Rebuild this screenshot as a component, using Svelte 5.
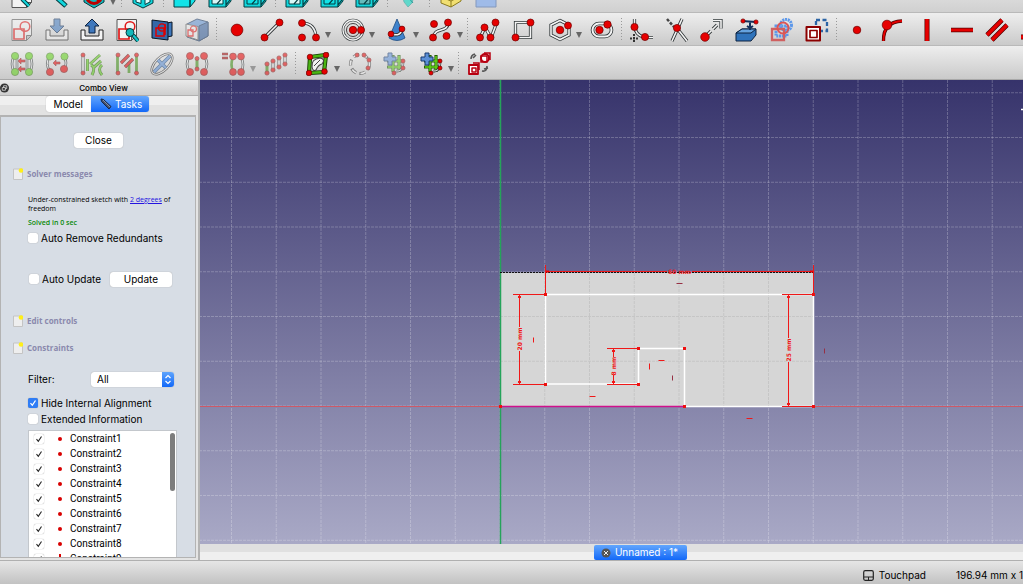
<script>
  const dot = (x, y, r = 3.2) =>
    `<circle cx="${x}" cy="${y}" r="${r}" fill="#e60000" stroke="#6d0000" stroke-width=".7"/>`;
  const green = (x, y, r = 3.2) =>
    `<circle cx="${x}" cy="${y}" r="${r}" fill="#5fd016" stroke="#2c6b06" stroke-width=".7"/>`;
  const rod = (d, inner = '#f4f4f4', w = 3.2) =>
    `<path d="${d}" fill="none" stroke="#2e3436" stroke-width="${w}"/><path d="${d}" fill="none" stroke="${inner}" stroke-width="${w - 1.6}"/>`;
  const bar = (d, w = 4) =>
    `<path d="${d}" fill="none" stroke="#4d0000" stroke-width="${w}"/><path d="${d}" fill="none" stroke="#e60000" stroke-width="${w - 1.4}"/>`;
  const line = (d, c, w = 1.5, extra = '') =>
    `<path d="${d}" fill="none" stroke="${c}" stroke-width="${w}" ${extra}/>`;
  const fill = (d, f, s = '#0b1521', w = 1) =>
    `<path d="${d}" fill="${f}" stroke="${s}" stroke-width="${w}" stroke-linejoin="round"/>`;
  const sketch = '<circle cx="15" cy="8.5" r="4.8" fill="none" stroke="#e01818" stroke-width="1.5"/><path d="M4 11h10v10H4z" fill="none" stroke="#e01818" stroke-width="1.7"/>';
  const page = fill('M2 1.5h19.500v16l-5 5H2z', '#f3f3f3', '#555') + fill('M21.500 17.500h-5v5z', '#bbb', '#555');
  const cube = (face) =>
    fill('M1 7 6 1h17v15l-5 6H1z', '#12d6dc', '#053c40') + fill('M4 10h11v9H4z', face, '#053c40') + line('M18 22V7H1M18 7l5-6M18 20l4-5M9 19l6-7', '#053c40', 1.2);
  const iso = fill('M12 1 22 6v12l-10 5L2 18V6z', '#12d6dc', '#053c40') + fill('M5 9l5 2.500v7L5 17z', '#dff', '#053c40') + fill('M14 11.500 19 9v8l-5 2.500z', '#dff', '#053c40');
  const hash = line('M10 3v17M16 3v17M4 9h17M4 15h17', '#245c06', 3.2) + line('M10 4v15M16 4v15M5 9h15M5 15h15', '#5fd016', 1.6)
    + fill('M5 1h4v4h4v4H9v4H5V9H1V5h4z', '#5b8fd6', '#183a70') + rod('M13 19q7 1 7-8', '#f4f4f4', 2.6) + dot(20, 9, 2) + dot(20, 16, 2) + dot(11, 21, 2);
  const mirror = (d) => rod('M4 4q-4 8 0 16M20 4q4 8 0 16', '#f4f4f4', 2.6) + rod('M7 5v14M17 5v14', '#f4f4f4', 2.6) + d;
  const arrowLeft = (x, y) => fill(`M${x} ${y}l3-3v2h4v2h-4v2z`, '#e60000', '#6d0000', 0.6);

  const icons = {
    fitAll: page + line('M19 21l-7-7', '#053c40', 4) + line('M19 21l-7-7', '#12d6dc', 2),
    zoom: line('M21 21 11 12', '#053c40', 5) + line('M20.500 20.500 11 12', '#12d6dc', 3) + '<circle cx="8" cy="8" r="6" fill="#dff" stroke="#053c40" stroke-width="2"/>',
    style: fill('M12 1 22 6v11l-10 6L2 17V6z', '#12b6bc', '#053c40') + '<circle cx="12" cy="11" r="7.500" fill="none" stroke="#b00" stroke-width="3"/>' + line('M7 6l10 10', '#b00', 2.5),
    iso,
    front: fill('M1 5 6 1h16v15l-5 6H1z', '#12e3e8', '#053c40') + line('M17 22V5l5-4', '#053c40'),
    top: cube('#d9f7f7'),
    right: cube('#12e3e8'),
    left: cube('#6bb'),
    measure: fill('M4 5h15l-4 13-4 4-4-5z', '#60d8cb', '#6aa', 0.7) + line('M10 11l6 7', '#399', 1),
    part: fill('M2 12 10 7l12 4v5l-10 6L2 18z', '#f1df72', '#8a7a20') + line('M2 12l10 4 10-5M12 16v6', '#8a7a20', 1),
    folder: fill('M2 5h20v17H2z', '#9fbbe8', '#8398bd'),
    sketch: page + sketch,
    importer: fill('M1 12h4v6h14v-6h4v10H1z', '#f4f4f4', '#222') + fill('M9 1h6v7h4l-7 7-7-7h4z', '#3f78bd', '#12305a'),
    exporter: fill('M1 12h4v6h14v-6h4v10H1z', '#f4f4f4', '#222') + fill('M9 15h6V8h4l-7-7-7 7h4z', '#3f78bd', '#0d2340'),
    viewSketch: page + sketch + line('M23 23l-5-6', '#053c40', 4) + line('M23 23l-5-6', '#12c6c9', 2.2) + '<circle cx="15" cy="14.500" r="4" fill="#14b8bb" stroke="#053c40"/>',
    section: fill('M17 5l5-1v14l-5 1z', '#3f78bd') + fill('M2 2l16 2v18L2 20z', '#3568a8') + '<circle cx="12" cy="9.500" r="3.600" fill="none" stroke="#d00" stroke-width="1.400"/>' + line('M6 10h8v8H6zM15 6v11', '#d00', 1.5),
    mapSketch: fill('M2 6 12 1l11 3v14l-9 5L2 19z', '#5d8fd0', '#12305a') + fill('M14 8l9-4v14l-9 5z', '#355f9c', '#12305a') + fill('M1 6l12 2.500V22L1 18z', '#eee', '#555') + line('M3 12h5v6H3z', '#e01818', 1.3) + '<circle cx="8.500" cy="11" r="3" fill="none" stroke="#e01818" stroke-width="1.200"/>',
    point: dot(12, 12, 5.9),
    line: rod('M4 20 20 4') + dot(4.5, 19.5, 3.5) + dot(19.5, 4.5, 3.5),
    arc: rod('M5 5Q18 5 19 19') + dot(5, 5, 3.5) + dot(5, 19.5, 3.5) + dot(19, 19.5, 3.5),
    circle: '<circle cx="12" cy="12" r="10" fill="none" stroke="#2e3436" stroke-width="2.600"/><circle cx="12" cy="12" r="10" fill="none" stroke="#f4f4f4" stroke-width="1.300"/><circle cx="12" cy="12" r="6.500" fill="none" stroke="#444" stroke-width="1"/>' + dot(12, 12, 3.7) + dot(20, 12, 3.5),
    conic: fill('M12 1 20 20q-8 5-16 0z', '#3f83cd', '#1c4a80', 0.8) + rod('M6 16q10 3 11-5') + dot(6, 16, 2.9) + dot(17, 11, 2.9),
    bspline: rod('M5 19C5 9 19 15 19 5') + dot(5, 6, 3.5) + dot(19, 4.5, 3.5) + dot(4, 19.5, 3.5) + dot(17.5, 18, 3.5),
    polyline: rod('M4 20 9 9l6 11 6-16') + dot(4, 19.5, 3.5) + dot(8.5, 9.5, 3.5) + dot(14.5, 19.5, 3.5) + dot(19.5, 4.5, 3.5),
    rect: rod('M4.500 4.500h15v15h-15z') + dot(19.5, 4.5, 3.5) + dot(4.5, 19.5, 3.5),
    polygon: rod('M12 2.500 21 7v10l-9 4.500L3 17V7z') + dot(12, 12, 3.8) + dot(20, 7.5, 3.5),
    slot: '<rect x="2.500" y="5.500" width="19" height="13" rx="6.500" fill="none" stroke="#2e3436" stroke-width="3.600"/><rect x="2.500" y="5.500" width="19" height="13" rx="6.500" fill="none" stroke="#f4f4f4" stroke-width="2"/>' + dot(9.5, 12, 3.7) + dot(17.5, 6.5, 3.7),
    fillet: rod('M4.500 1v9M14 19.500h9') + rod('M4.500 8q1 9 9 11') + line('M4 16v8M0 20.500h8', '#333', 2, 'stroke-dasharray="2 1"') + dot(4.5, 9, 3.6) + dot(15, 19, 3.6),
    trim: rod('M17 1 7 23M11 9l11 14') + line('M2 1l7 8', '#444', 2.5, 'stroke-dasharray="3 1.500"') + dot(12, 10, 3.6),
    extend: rod('M6 18 17 7') + line('M11 13l2-2', '#ddd', 5) + rod('M13 2.500h8v8') + dot(5, 19, 4.3),
    external: fill('M1 15l6-4h14v6l-5 6H1z', '#2f73bb', '#0d2340') + fill('M1 15h15l5-4H7z', '#65a3df', '#0d2340') + line('M15 12V4M7 3l14 1M12 8l3 2 3-2', '#12305a', 2) + dot(8, 3, 2.1) + dot(21, 4, 2.1),
    carbon: line('M6 8h11v10H6z', '#5d98ea', 3, 'stroke-dasharray="2 .700"') + '<circle cx="16" cy="7" r="5.500" fill="none" stroke="#5d98ea" stroke-width="3" stroke-dasharray="2 .700"/>' + line('M2 11h12v11H2z', '#d06060', 2.3) + '<circle cx="13" cy="10" r="5.500" fill="none" stroke="#dc5555" stroke-width="2"/>',
    construction: line('M11 2h11v11H11z', '#2b64a5', 2.3, 'stroke-dasharray="4 2.500"') + fill('M1.500 9h13.500v13.500H1.500z', '#fff', '#8c0000', 2) + fill('M5 12.500h7v7H5z', '#fff', '#8c0000', 1.7),
    coincident: dot(12, 12, 3.8),
    pointOn: bar('M3.500 23Q3 4 22 3', 3.3) + dot(7, 7, 4.8),
    vertical: bar('M12 1v22', 5),
    horizontal: bar('M1 12h22', 4.5),
    parallel: bar('M2 17 17 2M7 22 22 7', 4.6),
    perpendicular: bar('M1 19h22M12 2v16', 5),
    endsSwap: mirror(arrowLeft(8, 9) + arrowLeft(8, 17) + green(5, 4, 3.6) + green(19, 4, 3.6) + green(5, 20, 3.6) + green(19, 20, 3.6)),
    linkEnds: rod('M4 5q-4 8 1 14M19 5q4 6 0 12', '#f4f4f4', 2.6) + arrowLeft(8, 11) + green(5, 4.5, 3.6) + green(19.5, 4.5, 3.6) + dot(5, 20, 3.6) + dot(19, 17, 3.6),
    selectConstraints: rod('M3 3v18') + line('M7.500 7v12M10 12l10-9M13 16l8-7M11 13q5 2 1 10M22 13q-5 4 0 10', '#2c6b06', 3) + line('M7.500 7v12M10 12l10-9M13 16l8-7M11 13q5 2 1 10M22 13q-5 4 0 10', '#5fd016', 1.6) + dot(3, 3, 2) + dot(3, 21, 2),
    selectElements: line('M2.500 3v18M21.500 3v18M14 10v11', '#3a8c0e', 2.8) + bar('M6 11 14 3M10 15l8-8', 3.2) + dot(3, 3, 2) + dot(3, 21, 2) + dot(21.5, 3, 2) + dot(21.5, 21, 2),
    internal: '<ellipse cx="12" cy="12" rx="13" ry="6.500" transform="rotate(-45 12 12)" fill="none" stroke="#222" stroke-width="2.500"/><ellipse cx="12" cy="12" rx="13" ry="6.500" transform="rotate(-45 12 12)" fill="none" stroke="#eee" stroke-width="1"/>' + line('M4 20 20 4M8 8l8 8', '#1c4a80', 3.6) + line('M4 20 20 4M8 8l8 8', '#5b8fd6', 2),
    symmetry: rod('M5 4q-6 8 0 16M19 4q6 8 0 16', '#f4f4f4', 2.6) + line('M12 7v10', '#3a8c0e', 3) + dot(5, 4, 3.5) + dot(19, 4, 3.5) + dot(5, 20, 3.5) + dot(19, 20, 3.5) + dot(12, 6.5, 2) + dot(12, 17, 2),
    clone: rod('M19 5q4 8 0 15', '#f4f4f4', 2.6) + line('M11 5q-3 8 0 14', '#3a8c0e', 2.6) + bar('M0 2h6M0 6h6', 2.3) + dot(11, 4.5, 3.4) + dot(19, 4.5, 3.4) + dot(11, 20, 3.4) + dot(19, 20, 3.4),
    array: line('M3 13v8', '#3a8c0e', 3) + rod('M9 9v10M15 6v9M21 3v9') + dot(3, 12, 2.1) + dot(3, 21, 2.1) + dot(9, 9, 2.1) + dot(9, 18, 2.1) + dot(15, 6, 2.1) + dot(15, 15, 2.1) + dot(21, 3, 2.1) + dot(21, 12, 2.1),
    bsplineInfo: line('M4 5 20 3 18 20 3 21z', '#163d04', 4.2) + line('M4 5 20 3 18 20 3 21z', '#4bb514', 2.4) + fill('M6 15Q5 7 14 6q6 1 2 6-4 1-6 6-3 2-4-3z', '#f2f2f2', '#444', 1.1) + line('M8 14l6-6', '#444', 1) + dot(4, 5, 2.8) + dot(20, 3, 2.8) + dot(18.5, 19.5, 2.8) + dot(3, 21, 2.8),
    polygonInfo: '<circle cx="12" cy="12" r="9.500" fill="none" stroke="#333" stroke-width="3.200" stroke-dasharray="6 3.400"/><circle cx="12" cy="12" r="9.500" fill="none" stroke="#eee" stroke-width="1.700" stroke-dasharray="5 4.400"/>' + dot(9, 3, 2) + dot(16, 3, 2) + dot(21, 8, 2) + dot(20, 16, 2),
    grid: hash,
    virtual: fill('M2 13h9v9H2z', '#fff', '#b80010', 1.8) + fill('M5 16h4v4H5z', '#fff', '#b80010', 1.5) + line('M6 11h6v7', '#b80010', 1.5) + '<circle cx="18" cy="6" r="4" fill="#fff" stroke="#b80010" stroke-width="2"/>' + line('M14 4h6v6h-6zM17 1h6v7', '#b80010', 1.5) + line('M4 7q0-4 4-5M6 6l3-3M15 19q5 1 5-5M17 17l4-1', '#555', 1.6)
  };

  const b = (icon, label, opts = {}) => ({ icon, label, ...opts });
  const menu = { menu: true };
  const off = { disabled: true };
  const sep = { sep: true };

  const bars = [
    {
      name: 'view',
      items: [
        b('fitAll', 'Fit all'), b('zoom', 'Fit selection'), b('style', 'Draw style', menu), sep, b('iso', 'Isometric'), sep,
        b('front', 'Front'), b('top', 'Top'), b('right', 'Right'), sep, b('top', 'Rear'), b('right', 'Bottom'), b('left', 'Left'), sep,
        b('measure', 'Measure distance'), sep, b('part', 'Create part'), b('folder', 'Create group')
      ]
    },
    {
      name: 'geometry',
      items: [
        b('sketch', 'New sketch', off), b('importer', 'Edit sketch', off), b('exporter', 'Leave sketch'), b('viewSketch', 'View sketch'),
        b('section', 'View section'), b('mapSketch', 'Map sketch', off), sep, b('point', 'Point'), b('line', 'Line'), b('arc', 'Arc', menu),
        b('circle', 'Circle', menu), b('conic', 'Conic', menu), b('bspline', 'B-spline', menu), sep, b('polyline', 'Polyline'),
        b('rect', 'Rectangle'), b('polygon', 'Polygon', menu), b('slot', 'Slot'), sep, b('fillet', 'Fillet'), b('trim', 'Trim'),
        b('extend', 'Extend'), b('external', 'External geometry'), b('carbon', 'Carbon copy'), b('construction', 'Construction mode'), sep,
        b('coincident', 'Coincident'), b('pointOn', 'Point on object'), b('vertical', 'Vertical'), b('horizontal', 'Horizontal'),
        b('parallel', 'Parallel'), b('perpendicular', 'Perpendicular')
      ]
    },
    {
      name: 'tools',
      items: [
        b('endsSwap', 'Close shape', off), b('linkEnds', 'Connect edges', off), b('selectConstraints', 'Select constraints', off),
        b('selectElements', 'Select elements', off), b('internal', 'Internal geometry', off), b('symmetry', 'Symmetry', off),
        b('clone', 'Clone', { menu: true, disabled: true }), b('array', 'Rectangular array', off), sep, b('bsplineInfo', 'B-spline information', menu),
        b('polygonInfo', 'Convert to B-spline', off), b('grid', 'Increase degree', off), b('grid', 'Knot multiplicity', menu), sep,
        b('virtual', 'Switch virtual space')
      ]
    }
  ];

  let constraints = $state(Array.from({ length: 9 }, (_, i) => ({ name: `Constraint${i + 1}`, active: true })));
  let filter = $state('All');
  let hideInternal = $state(true);
  let extended = $state(false);
  let autoRemove = $state(false);
  let autoUpdate = $state(false);

  // Sketch geometry is measured from the origin, with y growing downwards.
  const cell = 44.75;
  const columns = Array.from({ length: 42 }, (_, i) => (i - 6) * cell);
  const rows = Array.from({ length: 34 }, (_, i) => (i - 7) * cell);
  const vertices = [[0, 0], [45, -112], [313, -112], [313, 0], [184, 0], [184, -58], [138, -58], [138, -22], [45, -22]];
  const heights = [
    { x: 19, from: -112, to: -22, edge: 45, label: '20 mm' },
    { x: 113, from: -58, to: -22, edge: 138, label: '8 mm' },
    { x: 288, from: -112, to: 0, edge: 313, label: '25 mm' }
  ];
  const marks = ['M33-69v5', 'M89-10h6', 'M149-43v6', 'M158-46h6', 'M246 12h6'];
  const darkMarks = ['M172-31v5', 'M324-58v5', 'M176-123h6'];
</script>

{#snippet noteIcon()}
  <svg class="note" viewBox="0 0 10 12" aria-hidden="true">
    <path d="M.500 1h9v10.500h-9z" fill="#eee" stroke="#c4c4c4" />
    <circle cx="8" cy="2.500" r="2.300" fill="#ffef18" />
  </svg>
{/snippet}

<div class="app">
  {#each bars as group}
    <div class="toolbar {group.name}" role="toolbar" aria-label={group.name}>
      {#each group.items as item}
        {#if item.sep}
          <span class="sep"></span>
        {:else}
          <button class="tool" class:menu={item.menu} disabled={item.disabled} aria-label={item.label}>
            <svg viewBox="0 0 24 24">{@html icons[item.icon]}</svg>
            {#if item.menu}<i></i>{/if}
          </button>
        {/if}
      {/each}
    </div>
  {/each}

  <div class="work">
    <aside>
      <header>
        <button class="float" aria-label="Float panel">
          <svg viewBox="0 0 10 10"><circle cx="5" cy="5" r="5" fill="#333" /><path d="M2.500 4.500h3.500v3h-3.500zM4 4.500v-2h3.500v3h-1.500" fill="none" stroke="#eee" stroke-width=".8" /></svg>
        </button>
        <h1>Combo View</h1>
      </header>
      <nav>
        <button class="tab">Model</button>
        <button class="tab active">
          <svg viewBox="0 0 12 12"><path d="M1 1l2.500.500 7.500 7-2 2.500-7.500-7.500z" fill="#46506a" stroke="#14264a" /><path d="M3 2l7 7" stroke="#8492a8" /></svg>
          Tasks
        </button>
      </nav>
      <div class="panel">
        <button class="push close">Close</button>

        <h2>{@render noteIcon()}Solver messages</h2>
        <p class="message">Under-constrained sketch with <a href="#dof">2 degrees</a> of freedom</p>
        <p class="solved">Solved in 0 sec</p>
        <label class="check"><input type="checkbox" bind:checked={autoRemove} />Auto Remove Redundants</label>
        <div class="update">
          <label class="check"><input type="checkbox" bind:checked={autoUpdate} />Auto Update</label>
          <button class="push">Update</button>
        </div>

        <h2 class="edit">{@render noteIcon()}Edit controls</h2>
        <h2 class="constraints">{@render noteIcon()}Constraints</h2>
        <div class="filter">
          <label for="filter">Filter:</label>
          <div class="select">
            <select id="filter" bind:value={filter}>
              <option>All</option>
              <option>Normal</option>
              <option>Datums</option>
            </select>
            <svg viewBox="0 0 12 15" aria-hidden="true"><path d="M3.500 6 6 3.500 8.500 6M3.500 9 6 11.500 8.500 9" fill="none" stroke="#fff" stroke-width="1.200" /></svg>
          </div>
        </div>
        <label class="check"><input type="checkbox" bind:checked={hideInternal} />Hide Internal Alignment</label>
        <label class="check"><input type="checkbox" bind:checked={extended} />Extended Information</label>
        <div class="list">
          <ul>
            {#each constraints as c, i}
              <li>
                <label>
                  <input type="checkbox" bind:checked={c.active} />
                  <span class="glyph" class:upright={i === 8}></span>
                  {c.name}
                </label>
              </li>
            {/each}
          </ul>
          <span class="thumb"></span>
        </div>
      </div>
    </aside>

    <main>
      <svg class="canvas" role="img" aria-label="Sketch">
        <g transform="translate(300 326)">
          <g class="grid">
            {#each columns as x}<line x1={x} x2={x} y1="-326" y2="1200" />{/each}
            {#each rows as y}<line x1="-301" x2="1600" y1={y} y2={y} />{/each}
          </g>
          <path d="M0-133.500h313.500V.500H0z" fill="#d6d6d6" />
          <g class="face-grid">
            {#each [1, 2, 3, 4, 5, 6] as i}<line x1={i * cell} x2={i * cell} y1="-133" y2="0" />{/each}
            {#each [-2, -1] as i}<line x1="0" x2="313" y1={i * cell} y2={i * cell} />{/each}
          </g>
          <path d="M-301 .500H1600" stroke="#ce5967" />
          <path d="M.500-326V1200" stroke="#25a35a" stroke-width="1.500" />
          <path d="M0-133.500h313" stroke="#111" stroke-dasharray="2 1" />
          <path d="M45-111.500h268.500V.500H184.500V-57.500H138.500v35.500H45.500V-112" fill="none" stroke="#fff" stroke-width="1.500" />
          <path d="M0 .500h184" stroke="#d0108c" stroke-width="1.500" />
          <g class="dim">
            <path d="M45-134.500h122M192-134.500h121M45.500-141v30M313.500-141v30" />
            <text x="179.500" y="-132">60 mm</text>
            {#each heights as h}
              {@const mid = (h.from + h.to) / 2}
              {@const gap = h.label.length > 4 ? 12 : 9}
              <path d="M{h.x - 6} {h.from + 0.5}H{h.edge}M{h.x - 6} {h.to + 0.5}H{h.edge}M{h.x + 0.5} {h.from}V{mid - gap}M{h.x + 0.5} {mid + gap}V{h.to}" />
              <path d="M{h.x - 1} {h.from + 3}h3M{h.x - 1} {h.to - 2}h3" stroke-width="2" />
              <text transform="translate({h.x + 3} {mid}) rotate(-90)">{h.label}</text>
            {/each}
            {#each marks as d}<path {d} transform="translate(.5 .5)" />{/each}
            {#each darkMarks as d}<path {d} transform="translate(.5 .5)" stroke="#963044" />{/each}
          </g>
          {#each vertices as [x, y]}<rect x={x - 1} y={y - 1} width="3" height="3" fill="#ee1010" />{/each}
          <path d="M46-134.500h3M310-134.500h3" stroke="#f00000" stroke-width="2" />
          <path d="M521-296.500h3" stroke="#fff" stroke-width="1.500" />
        </g>
      </svg>
      <div class="documents">
        <button class="doc">
          <svg viewBox="0 0 10 10"><circle cx="5" cy="5" r="4.500" fill="#555" /><path d="M3 3l4 4M7 3 3 7" stroke="#eee" /></svg>
          Unnamed : 1*
        </button>
      </div>
    </main>
  </div>

  <footer>
    <button class="navstyle">
      <svg viewBox="0 0 11 11"><rect x=".7" y=".7" width="9.600" height="9.600" rx="1.500" fill="none" stroke="#222" stroke-width="1.200" /><path d="M1 7h9M5.500 7v3" stroke="#222" /></svg>
      Touchpad
    </button>
    <span>196.94 mm x 1</span>
  </footer>
</div>

<style>
  :global(body) { margin: 0; }
  .app {
    display: flex;
    flex-direction: column;
    height: 100vh;
    overflow: hidden;
    font: 400 10px/15px Inter, "Liberation Sans", sans-serif;
    color: #000;
    background: #e6e6e6;
  }
  button { font: inherit; color: inherit; border: 0; padding: 0; background: none; }

  .toolbar {
    box-sizing: border-box;
    flex: none;
    display: flex;
    align-items: center;
    height: 33px;
    padding: 2px 0 0 4px;
    overflow: hidden;
    border-bottom: 1px solid #b9b9b9;
    background: linear-gradient(#eeeeee, #cacaca);
  }
  .toolbar.view {
    height: 13px;
    align-items: flex-end;
    padding-bottom: 3px;
    background: linear-gradient(#d9d9d9, #d0d0d0);
  }
  .toolbar.tools { height: 34px; border-bottom-color: #a8a8a8; }
  .tool {
    box-sizing: border-box;
    position: relative;
    flex: none;
    display: flex;
    justify-content: center;
    width: 35px;
  }
  .tool.menu { width: 44px; padding-right: 4px; }
  .tool svg { width: 24px; height: 24px; }
  .tool:disabled { opacity: 0.55; }
  .tool i {
    position: absolute;
    right: 2px;
    bottom: 4px;
    border: 3px solid transparent;
    border-top: 6px solid #666;
    border-bottom: 0;
  }
  .sep {
    flex: none;
    width: 1px;
    height: 24px;
    margin: 0 2px;
    background: repeating-linear-gradient(#999 0 1px, transparent 1px 3px);
  }
  .view .sep { margin: 0 3px; }

  .work { flex: 1; min-height: 0; display: flex; }
  aside {
    box-sizing: border-box;
    flex: none;
    width: 200px;
    display: flex;
    flex-direction: column;
    border-right: 2px solid #b4b4b4;
    background: #e4e4e4;
  }
  header {
    display: flex;
    align-items: center;
    height: 14px;
    padding-top: 1px;
    border-bottom: 1px solid #b0b0b0;
    background: linear-gradient(#eaeaea, #cdcdcd);
  }
  .float { display: flex; }
  .float svg { width: 9px; height: 10px; }
  h1 { flex: 1; margin: 0; font-size: 8px; font-weight: 500; text-align: center; }
  nav {
    display: flex;
    justify-content: center;
    height: 19px;
    padding-right: 3px;
    background: linear-gradient(#efefef 9px, #e2e2e2 9px);
  }
  .tab {
    height: 16px;
    padding: 0 8px;
    border-radius: 3px 0 0 3px;
    background: #fff;
    box-shadow: 0 0 1px #999;
  }
  .tab.active, .doc {
    display: flex;
    align-items: center;
    color: #fff;
    background: linear-gradient(#62a6fd, #1268f8);
  }
  .tab.active { gap: 3px; padding: 0 7px 0 9px; border-radius: 0 3px 3px 0; }
  .tab svg { width: 12px; height: 12px; }

  .panel {
    flex: 1;
    min-height: 0;
    display: flex;
    flex-direction: column;
    margin: 0 2px 2px 0;
    padding: 16px 18px 0 27px;
    overflow: hidden;
    border: 1px solid #b3b3b3;
    border-width: 2px 1px 1px 1px;
    background: #d7dde5;
  }
  .panel > * { flex: none; }
  .push {
    height: 15px;
    padding: 0 11px;
    border-radius: 3px;
    background: #fff;
    box-shadow: 0 0 1px #888;
  }
  .close { align-self: center; margin-right: 8px; }
  h2 {
    display: flex;
    align-items: center;
    gap: 4px;
    margin: 18px 0 0 -15px;
    font: 700 8px/15px "Open Sans", sans-serif;
    color: #8a89ad;
  }
  .note { width: 10px; height: 12px; }
  .message, .solved { margin: 14px 0 0; font: 500 7px/9px "Open Sans", sans-serif; color: #000; }
  .message { margin-right: -6px; }
  .message a { color: #2414e0; }
  .solved { margin-top: 5px; font-weight: 600; line-height: 10px; color: #0a8a0a; }
  .solved + .check { margin-top: 2px; }
  .check { display: flex; align-items: center; gap: 3px; height: 16px; white-space: nowrap; }
  input {
    appearance: none;
    box-sizing: border-box;
    flex: none;
    width: 10px;
    height: 10px;
    margin: 0;
    border-radius: 2px;
    background: #fff no-repeat center / 10px;
    box-shadow: 0 0 1px #888;
  }
  .check input:checked {
    background-color: #2f7df6;
    background-image: url("data:image/svg+xml,%3Csvg xmlns='http://www.w3.org/2000/svg' viewBox='0 0 10 10'%3E%3Cpath d='M2.500 5.200 4.300 7.300 7.500 2.500' fill='none' stroke='white' stroke-width='1.300'/%3E%3C/svg%3E");
  }
  .update { display: flex; justify-content: space-between; align-items: center; margin: 25px 5px 0 1px; }
  .update .push { padding: 0 14px; }
  h2.edit { margin-top: 26px; }
  h2.constraints { margin-top: 12px; }
  .filter { display: flex; justify-content: space-between; margin: 17px 3px 8px 0; }
  .select { position: relative; display: flex; width: 83px; }
  select {
    appearance: none;
    width: 100%;
    height: 15px;
    padding: 0 6px;
    font: inherit;
    color: inherit;
    border: 0;
    border-radius: 3px;
    background: #fff;
    box-shadow: 0 0 1px #888;
  }
  .select svg {
    position: absolute;
    right: 0;
    width: 12px;
    height: 15px;
    border-radius: 0 3px 3px 0;
    background: linear-gradient(#5ea4fd, #1268f8);
    pointer-events: none;
  }
  .panel > .list {
    position: relative;
    flex: 1;
    min-height: 0;
    margin-top: 3px;
    overflow: hidden;
    border: 1px solid #c3c7cc;
    border-bottom: 0;
    background: #fff;
  }
  ul { margin: 0; padding: 0; list-style: none; }
  li label {
    display: flex;
    align-items: center;
    height: 15px;
    padding-left: 5px;
    font-family: Roboto, "Liberation Sans", sans-serif;
  }
  li input:checked {
    background-image: url("data:image/svg+xml,%3Csvg xmlns='http://www.w3.org/2000/svg' viewBox='0 0 10 10'%3E%3Cpath d='M2.500 5.200 4.300 7.300 7.500 2.500' fill='none' stroke='%23222' stroke-width='1.100'/%3E%3C/svg%3E");
  }
  .glyph { width: 4px; height: 4px; margin: 0 8px 0 14px; border-radius: 2px; background: #d90000; }
  .glyph.upright { width: 2px; height: 9px; margin: 0 9px 0 15px; border-radius: 0; }
  .thumb {
    position: absolute;
    top: 2px;
    right: 1px;
    width: 5px;
    height: 58px;
    border-radius: 3px;
    background: #7d7d7d;
  }

  main { flex: 1; min-width: 0; display: flex; flex-direction: column; }
  .canvas {
    flex: 1;
    min-height: 0;
    width: 100%;
    background: linear-gradient(#36336b, #a9a9c6);
  }
  .grid line { stroke: #fff; stroke-opacity: 0.23; stroke-dasharray: 3 1; }
  .face-grid line { stroke: #c6c6c6; stroke-dasharray: 3 1; }
  .dim { stroke: #f01818; fill: none; }
  .dim text {
    font: 700 6px "DejaVu Sans", sans-serif;
    fill: #f01818;
    stroke: none;
    text-anchor: middle;
  }
  .documents {
    flex: none;
    display: flex;
    justify-content: center;
    align-items: flex-end;
    height: 16px;
    padding: 0 58px 0 116px;
    background: linear-gradient(#e0e0e0 8px, #efefef 8px);
  }
  .doc { gap: 4px; height: 15px; padding: 0 9px 0 7px; border-radius: 2px; }
  .doc svg { width: 10px; height: 10px; }

  footer {
    box-sizing: border-box;
    flex: none;
    display: flex;
    align-items: center;
    justify-content: flex-end;
    gap: 30px;
    height: 24px;
    padding-top: 6px;
    border-top: 1px solid #b0b0b0;
    background: linear-gradient(#e6e6e6, #c2c2c2);
    white-space: nowrap;
  }
  .navstyle { display: flex; align-items: center; gap: 5px; }
  .navstyle svg { width: 11px; height: 11px; }
</style>
